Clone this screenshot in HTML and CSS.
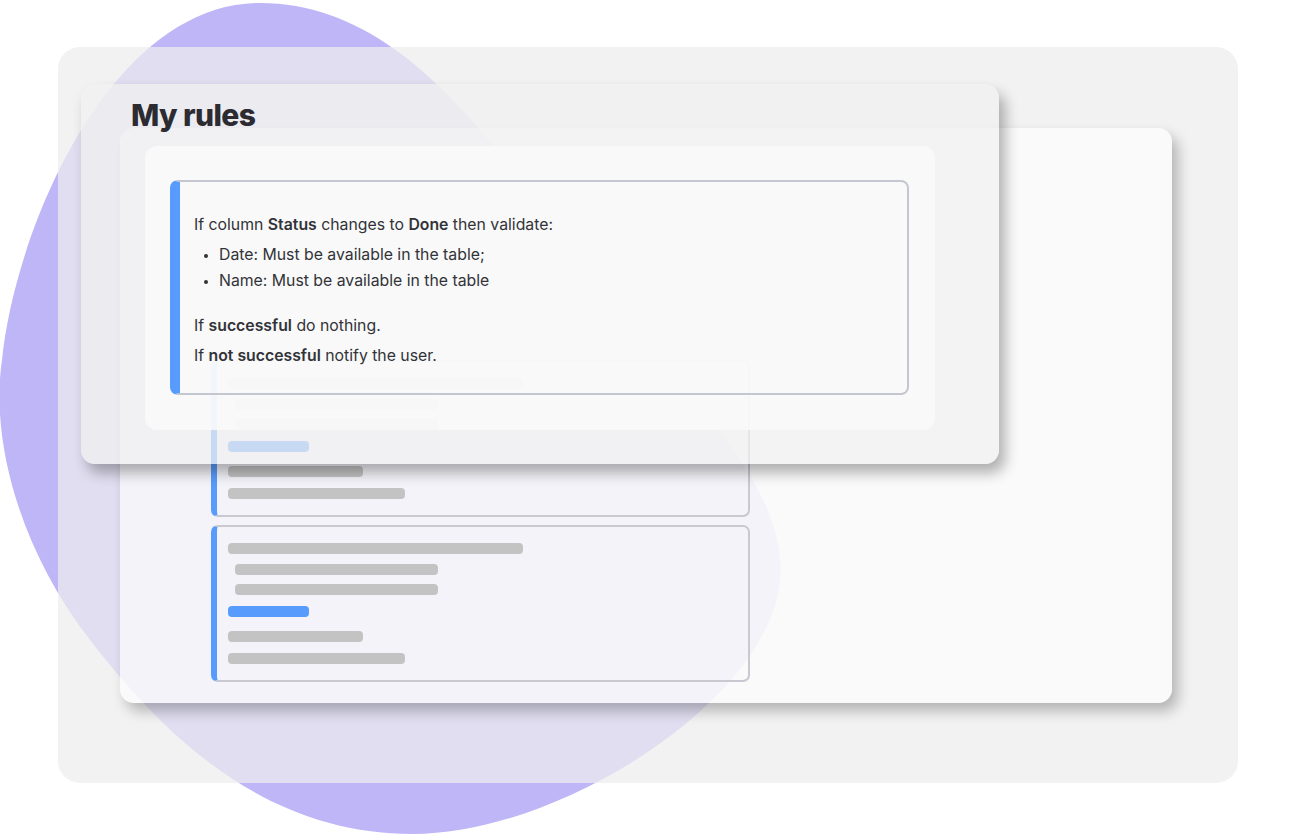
FILE: index.html
```html
<!DOCTYPE html>
<html lang="en">
<head>
  <meta charset="UTF-8">
  <meta name="viewport" content="width=device-width, initial-scale=1.0">
  <title>My rules</title>
  <link rel="stylesheet" href="styles.css">
</head>
<body>
  <div class="stage">
    <!-- blob de fondo -->
    <svg class="blob" width="1294" height="834" viewBox="0 0 1294 834">
      <path d="M260,3 C378,3 466,100 556,230 C646,360 790,470 780,580 C770,700 560,834 413,834 C260,834 160,730 90,640 C20,550 -10,440 2,360 C15,230 110,3 260,3 Z" fill="#bfb6f7"/>
    </svg>

    <div class="board">
      <div class="back-card">
        <div class="sk-card">
          <div class="sk-line sk-long"></div>
          <div class="sk-line sk-mid sk-indent"></div>
          <div class="sk-line sk-mid sk-indent"></div>
          <div class="sk-line sk-btn"></div>
          <div class="sk-line sk-short"></div>
          <div class="sk-line sk-med"></div>
        </div>
        <div class="sk-card">
          <div class="sk-line sk-long"></div>
          <div class="sk-line sk-mid sk-indent"></div>
          <div class="sk-line sk-mid sk-indent"></div>
          <div class="sk-line sk-btn"></div>
          <div class="sk-line sk-short"></div>
          <div class="sk-line sk-med"></div>
        </div>
      </div>

      <div class="rules-panel">
        <h1>My rules</h1>
        <div class="rules-body">
          <div class="rule-card">
            <p>If column <b>Status</b> changes to <b>Done</b> then validate:</p>
            <ul>
              <li>Date: Must be available in the table;</li>
              <li>Name: Must be available in the table</li>
            </ul>
            <p class="gap">If <b>successful</b> do nothing.</p>
            <p>If <b>not successful</b> notify the user.</p>
          </div>
        </div>
      </div>
    </div>
  </div>
</body>
</html>
```

FILE: styles.css
```css
body {
  margin: 0;
  background: #ffffff;
  font-family: Inter, "Noto Sans", sans-serif;
  color: #323338;
}

.stage {
  position: relative;
  width: 1294px;
  height: 834px;
  overflow: hidden;
}

.blob {
  position: absolute;
  top: 0;
  left: 0;
  z-index: 0;
}

/* Panel gris grande */
.board {
  position: relative;
  z-index: 1;
  box-sizing: border-box;
  margin: 47px 0 0 58px;
  width: 1180px;
  height: 736px;
  padding: 81px 0 0 62px;
  border-radius: 22px;
  background: rgba(237, 237, 237, 0.72);
}

.back-card {
  box-sizing: border-box;
  width: 1052px;
  height: 575px;
  padding: 232px 0 0 91px;
  border-radius: 14px;
  background: rgba(254, 254, 254, 0.68);
  box-shadow: 6px 8px 14px rgba(0, 0, 0, 0.26);
  display: flex;
  flex-direction: column;
  gap: 8px;
}

.sk-card {
  box-sizing: border-box;
  width: 539px;
  height: 157px;
  padding: 16px 0 0 11px;
  border: 2px solid #c8c9d1;
  border-left: 6px solid #579bfc;
  border-radius: 7px;
  display: flex;
  flex-direction: column;
  align-items: flex-start;
}

.sk-line {
  height: 11px;
  border-radius: 4px;
  background: #c3c3c3;
  margin-bottom: 10px;
}

.sk-long { width: 295px; }
.sk-mid { width: 203px; }
.sk-indent { margin-left: 7px; margin-bottom: 9px; }
.sk-mid.sk-indent:nth-child(3) { margin-bottom: 11px; }
.sk-btn { width: 81px; background: #579bfc; margin-bottom: 14px; }
.sk-short { width: 135px; margin-bottom: 11px; }
.sk-med { width: 177px; }

/* Panel delantero */
.rules-panel {
  position: absolute;
  left: 23px;
  top: 37px;
  box-sizing: border-box;
  width: 918px;
  height: 380px;
  padding: 14px 0 0 50px;
  border-radius: 14px;
  background: rgba(240, 240, 240, 0.74);
  box-shadow: 6px 9px 14px rgba(0, 0, 0, 0.3);
}

.rules-panel h1 {
  margin: 0;
  font-size: 30px;
  line-height: 34px;
  font-weight: 800;
  letter-spacing: -0.6px;
  color: #2b2b31;
}

.rules-body {
  box-sizing: border-box;
  width: 790px;
  height: 284px;
  margin: 14px 0 0 14px;
  padding: 34px 0 0 25px;
  border-radius: 12px;
  background: rgba(250, 250, 250, 0.84);
}

.rule-card {
  box-sizing: border-box;
  width: 739px;
  height: 215px;
  padding: 33px 0 0 14px;
  border: 2px solid #c5c7d0;
  border-left: 10px solid #579bfc;
  border-radius: 8px;
  background: transparent;
  font-size: 15.8px;
  line-height: 20px;
}

.rule-card p {
  margin: 0 0 10px;
}

.rule-card b {
  font-weight: 600;
}

.rule-card ul {
  margin: 0;
  padding: 0 0 0 25px;
}

.rule-card li {
  margin-bottom: 6px;
}

.rule-card li::marker {
  font-size: 12px;
}

.rule-card .gap {
  margin-top: 25px;
}
```
